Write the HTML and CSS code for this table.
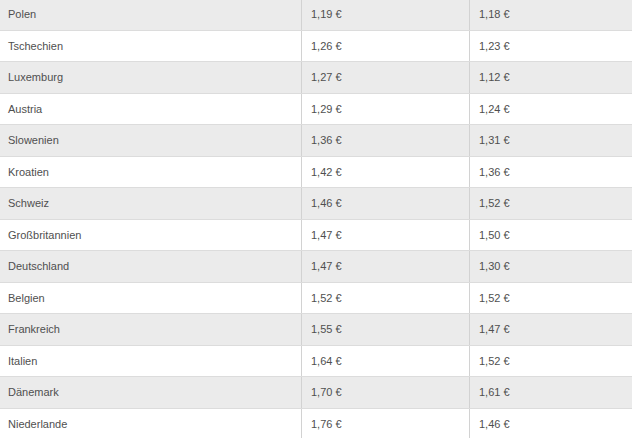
FILE: index.html
```html
<!DOCTYPE html>
<html>
<head>
<meta charset="utf-8">
<link rel="stylesheet" href="styles.css">
</head>
<body>
<table class="prices">
<tbody>
<tr><td class="c1">Polen</td><td class="c2">1,19 €</td><td class="c3">1,18 €</td></tr>
<tr><td class="c1">Tschechien</td><td class="c2">1,26 €</td><td class="c3">1,23 €</td></tr>
<tr><td class="c1">Luxemburg</td><td class="c2">1,27 €</td><td class="c3">1,12 €</td></tr>
<tr><td class="c1">Austria</td><td class="c2">1,29 €</td><td class="c3">1,24 €</td></tr>
<tr><td class="c1">Slowenien</td><td class="c2">1,36 €</td><td class="c3">1,31 €</td></tr>
<tr><td class="c1">Kroatien</td><td class="c2">1,42 €</td><td class="c3">1,36 €</td></tr>
<tr><td class="c1">Schweiz</td><td class="c2">1,46 €</td><td class="c3">1,52 €</td></tr>
<tr><td class="c1">Großbritannien</td><td class="c2">1,47 €</td><td class="c3">1,50 €</td></tr>
<tr><td class="c1">Deutschland</td><td class="c2">1,47 €</td><td class="c3">1,30 €</td></tr>
<tr><td class="c1">Belgien</td><td class="c2">1,52 €</td><td class="c3">1,52 €</td></tr>
<tr><td class="c1">Frankreich</td><td class="c2">1,55 €</td><td class="c3">1,47 €</td></tr>
<tr><td class="c1">Italien</td><td class="c2">1,64 €</td><td class="c3">1,52 €</td></tr>
<tr><td class="c1">Dänemark</td><td class="c2">1,70 €</td><td class="c3">1,61 €</td></tr>
<tr><td class="c1">Niederlande</td><td class="c2">1,76 €</td><td class="c3">1,46 €</td></tr>
</tbody>
</table>
</body>
</html>
```
FILE: styles.css
```css
html, body {
  margin: 0;
  padding: 0;
  background: #fff;
  overflow: hidden;
}
.prices {
  border-collapse: collapse;
  table-layout: fixed;
  width: 640px;
  margin-top: -1px;
  font-family: "Liberation Sans", Arial, sans-serif;
  font-size: 11px;
  color: #4f4f4f;
}
.prices tr:nth-child(odd) {
  background: #ebebeb;
}
.prices tr:nth-child(even) {
  background: #fff;
}
.prices td {
  height: 30.5px;
  padding: 0 0 0 8px;
  border-bottom: 1px solid #dcdcdc;
  vertical-align: middle;
  white-space: nowrap;
}
.prices .c1 {
  width: 293px;
}
.prices .c2 {
  width: 158px;
  border-left: 1px solid #d2d2d2;
  padding-left: 9px;
}
.prices .c3 {
  border-left: 1px solid #d2d2d2;
  padding-left: 9px;
}
```
